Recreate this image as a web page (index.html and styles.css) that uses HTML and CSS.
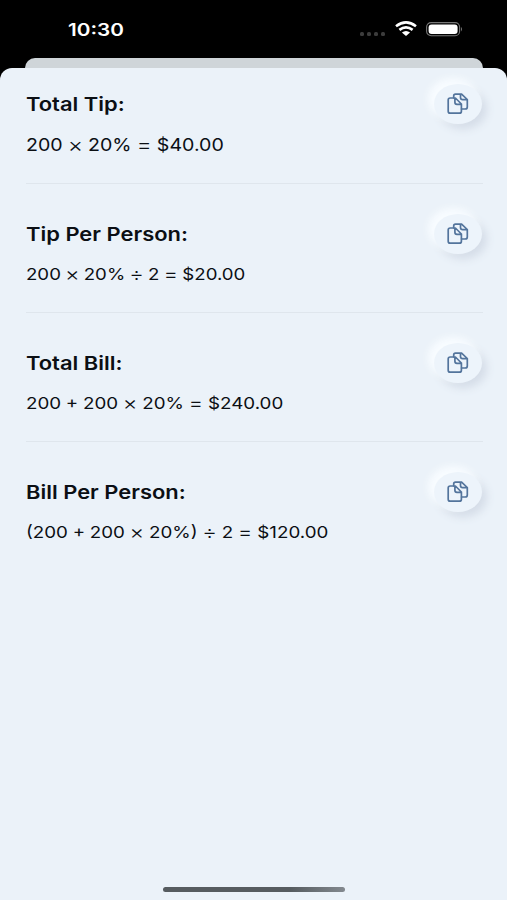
FILE: index.html
```html
<!DOCTYPE html>
<html lang="en">
<head>
<meta charset="utf-8">
<title>Tip breakdown</title>
<link rel="stylesheet" href="styles.css">
</head>
<body>
<svg class="defs" aria-hidden="true">
  <symbol id="copy" viewBox="0 0 22 22">
    <path d="M6.7 4.8V3Q6.7 1.2 8.5 1.2H14.6L20.3 6.5V14Q20.3 16 18.3 16H14.6M13.5 1.4V4.4Q13.5 6.6 15.7 6.6H20.2"/>
    <path d="M3.2 5H8.4L14.4 11V18.2Q14.4 20.2 12.4 20.2H3.2Q1.2 20.2 1.2 18.2V7Q1.2 5 3.2 5ZM7.9 5V9.3Q7.9 11.3 9.9 11.3H14.4"/>
  </symbol>
</svg>
<header class="status">
  <span class="time">10:30</span>
  <div class="indicators">
    <div class="signal"><i></i><i></i><i></i><i></i></div>
    <svg class="wifi" viewBox="0 0 24 16">
      <path d="M2 5.2Q12-2.4 22 5.2M5.4 8.9Q12 3.8 18.6 8.9"/>
      <path class="dot" d="M7.9 11.6Q12 8.2 16.1 11.6L12 15Z"/>
    </svg>
    <svg class="battery" viewBox="0 0 37 15">
      <rect class="shell" x=".6" y=".6" width="33" height="13.2" rx="4.5"/>
      <rect class="charge" x="2.6" y="2.4" width="29" height="9.6" rx="3"/>
      <path class="cap" d="M35 5Q37 7.2 35 9.4Z"/>
    </svg>
  </div>
</header>
<div class="back-sheet"></div>
<main class="sheet">
  <section class="item">
    <div><h2>Total Tip:</h2><p>200 <span class="op">×</span> 20% <span class="op">=</span> $40.00</p></div>
    <button class="copy" aria-label="Copy"><svg><use href="#copy"/></svg></button>
  </section>
  <section class="item">
    <div><h2>Tip Per Person:</h2><p>200 <span class="op">×</span> 20% <span class="op">÷</span> 2 <span class="op">=</span> $20.00</p></div>
    <button class="copy" aria-label="Copy"><svg><use href="#copy"/></svg></button>
  </section>
  <section class="item">
    <div><h2>Total Bill:</h2><p>200 + 200 <span class="op">×</span> 20% <span class="op">=</span> $240.00</p></div>
    <button class="copy" aria-label="Copy"><svg><use href="#copy"/></svg></button>
  </section>
  <section class="item">
    <div><h2>Bill Per Person:</h2><p>(200 + 200 <span class="op">×</span> 20%) <span class="op">÷</span> 2 <span class="op">=</span> $120.00</p></div>
    <button class="copy" aria-label="Copy"><svg><use href="#copy"/></svg></button>
  </section>
  <div class="home"></div>
</main>
</body>
</html>
```
FILE: styles.css
```css
* { box-sizing: border-box; }
body {
  margin: 0;
  height: 900px;
  display: flex;
  flex-direction: column;
  background: #000;
  font-family: Inter, "Liberation Sans", sans-serif;
  overflow: hidden;
}
.defs { position: absolute; width: 0; height: 0; }
.status {
  height: 58px;
  flex: none;
  display: flex;
  align-items: center;
  justify-content: space-between;
  padding: 0 44px 0 68px;
  color: #fff;
}
.time {
  padding-top: 1px;
  font-size: 17px;
  font-weight: 600;
  transform: scaleX(1.22);
  transform-origin: left;
}
.indicators { display: flex; align-items: center; }
.signal { display: flex; gap: 3px; margin: 9px 9px 0 0; }
.signal i { width: 4px; height: 4px; border-radius: 1.5px; background: #3c3c3c; }
.wifi { width: 24px; height: 16px; margin-right: 8px; fill: none; stroke: #fff; stroke-width: 2.6; }
.wifi .dot { fill: #fff; stroke: none; }
.battery { width: 37px; height: 15px; }
.shell { fill: none; stroke: #777; stroke-width: 1.1; }
.charge { fill: #fff; }
.cap { fill: #777; }
.back-sheet {
  height: 10px;
  flex: none;
  margin: 0 24px 0 25px;
  border-radius: 10px 10px 0 0;
  background: #cfd5d9;
}
.sheet {
  flex: 1;
  display: flex;
  flex-direction: column;
  padding: 0 24px 8px 26px;
  border-radius: 12px 12px 0 0;
  background: #ebf2f9;
  color: #0b0f14;
}
.item {
  height: 129px;
  flex: none;
  display: flex;
  justify-content: space-between;
  align-items: flex-start;
  padding-top: 38px;
  border-bottom: 1px solid #dfe6ed;
}
.item:first-child { height: 116px; padding-top: 24px; }
.item:nth-child(4) { border: 0; }
h2, p {
  width: max-content;
  margin: 0;
  line-height: 26px;
  transform-origin: left;
}
h2 { font-size: 19px; font-weight: 600; transform: scaleX(1.153); }
p { font-size: 16.5px; margin-top: 13px; word-spacing: -.5px; transform: scaleX(1.137); }
.item:first-child p { font-size: 17.5px; margin-top: 14px; transform: scaleX(1.12); }
.item:nth-child(2) p { word-spacing: -1px; transform: scaleX(1.13); }
.op { font-size: 1.2em; line-height: 0; font-weight: 300; vertical-align: -1px; }
.copy {
  width: 48px;
  height: 40px;
  margin: -8px 1px 0 0;
  padding: 0;
  display: grid;
  place-items: center;
  border: 0;
  border-radius: 50%;
  background: #edf4fb;
  box-shadow: -5px -5px 7px 1px #f8fcff, 5px 5px 8px #d5dde8;
}
.copy svg { width: 22px; height: 22px; fill: none; stroke: #53749c; stroke-width: 1.7; stroke-linejoin: round; stroke-linecap: round; }
.home {
  width: 182px;
  height: 5px;
  margin: auto auto 0 137px;
  border-radius: 3px;
  background: linear-gradient(90deg, #565c60, #565c60 70%, #83898f);
}
```
